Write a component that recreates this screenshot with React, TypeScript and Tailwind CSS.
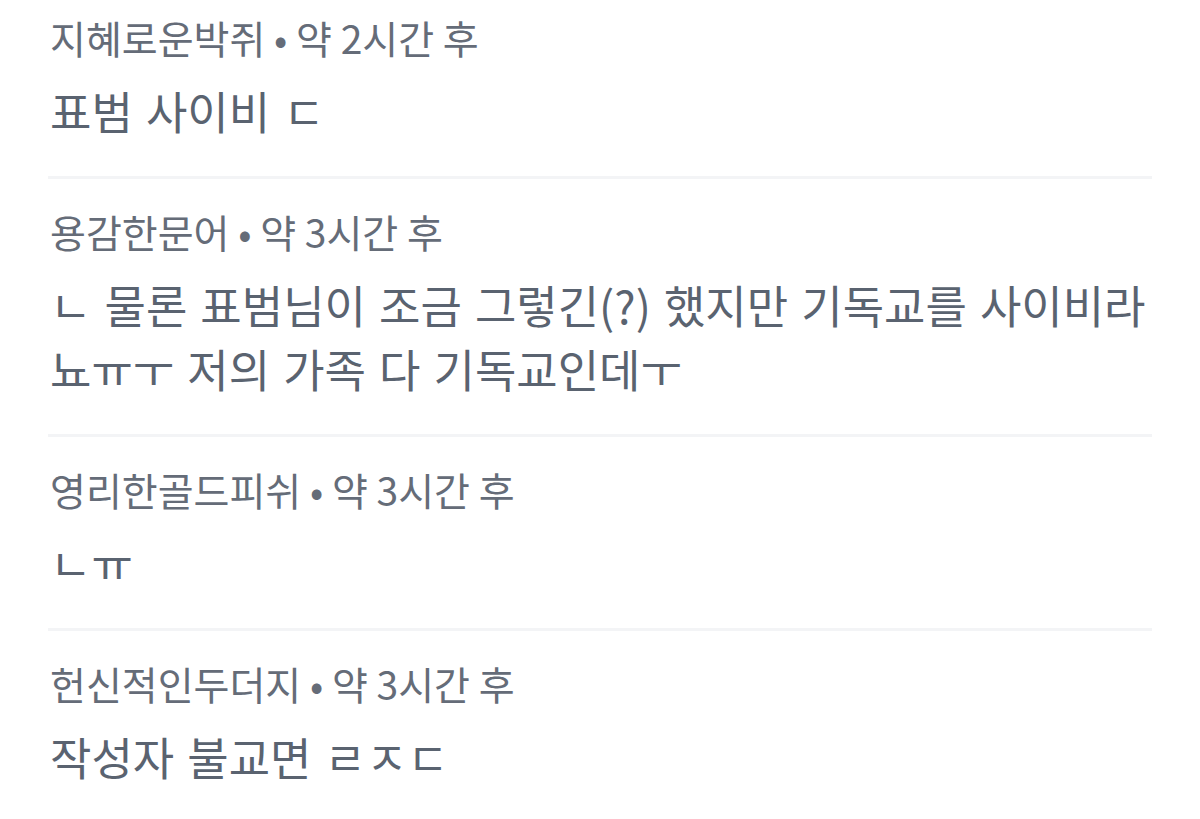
const comments = [
  { author: "지혜로운박쥐", time: "약 2시간 후", body: "표범 사이비 ㄷ" },
  {
    author: "용감한문어",
    time: "약 3시간 후",
    body: "ㄴ 물론 표범님이 조금 그렇긴(?) 했지만 기독교를 사이비라 뇨ㅠㅜ 저의 가족 다 기독교인데ㅜ",
  },
  { author: "영리한골드피쉬", time: "약 3시간 후", body: "ㄴㅠ" },
  { author: "헌신적인두더지", time: "약 3시간 후", body: "작성자 불교면 ㄹㅈㄷ" },
];

export default function App() {
  return (
    <div
      className="w-[1200px] h-[819px] overflow-hidden bg-white px-[50px]"
      style={{ fontFamily: '"Noto Sans CJK KR", "Noto Sans", sans-serif' }}
    >
      {comments.map((c, i) => (
        <div
          key={i}
          className={
            i === 0
              ? "pt-[13px] pb-[33px]"
              : "border-t-[3px] border-[#f3f4f6] -mx-[2px] px-[2px] pt-[28px] pb-[33px]"
          }
        >
          <div className="text-[39px] leading-[48px] text-[#656c78]">
            {c.author} • {c.time}
          </div>
          <div className="mt-[18px] text-[45px] leading-[64px] text-[#5a6370] [word-spacing:3px] w-[1100px]">
            {c.body}
          </div>
        </div>
      ))}
    </div>
  );
}
